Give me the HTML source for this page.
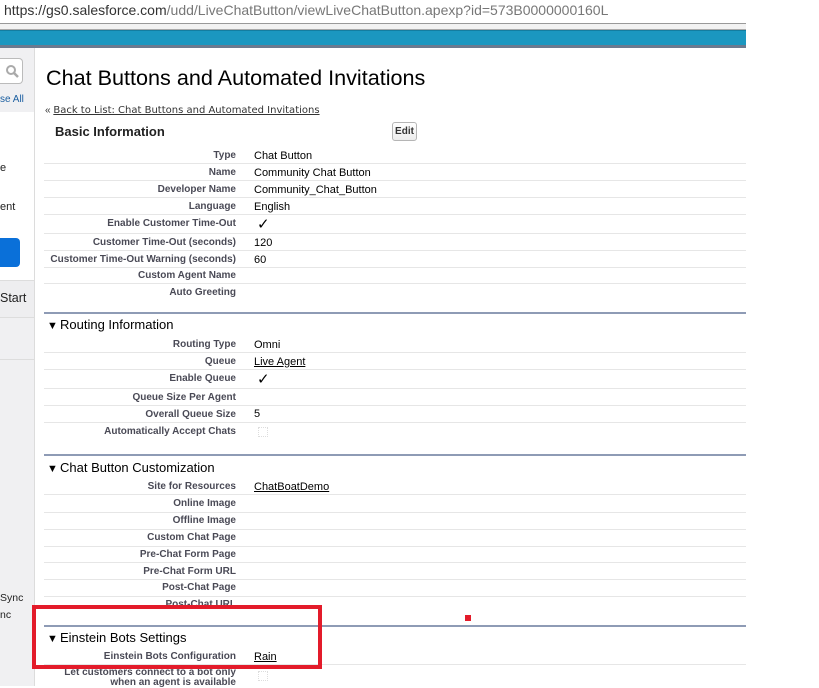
<!DOCTYPE html>
<html><head><meta charset="utf-8"><style>
*{margin:0;padding:0;box-sizing:border-box}
body{width:819px;height:686px;overflow:hidden;background:#fff;font-family:"Liberation Sans",Arial,sans-serif;position:relative}
.a{position:absolute;white-space:nowrap}
.l{position:absolute;right:583px;font-size:10px;font-weight:bold;color:#4a4a56;text-align:right;white-space:nowrap;margin-top:1px}
.v{position:absolute;left:254px;font-size:11px;color:#000;white-space:nowrap;margin-top:1px}
.hr{position:absolute;left:44px;width:702px;height:1px;background:#e6e6e6}
.sec{position:absolute;left:44px;width:702px;height:2px;background:#8e9bb5}
.h{position:absolute;left:47px;font-size:13px;color:#000;white-space:nowrap;margin-top:1px}
.h b{font-size:11px;display:inline-block;width:13px;font-weight:normal}
.cb{position:absolute;left:258px;width:10px;height:10px;border:1px dotted #ddd}
u{text-decoration:underline}
</style></head><body>
<div class="a" style="left:4px;top:2px;font-size:14px;color:#333">https://gs0.salesforce.com<span style="color:#777">/udd/LiveChatButton/viewLiveChatButton.apexp?id=573B0000000160L</span></div>
<div class="a" style="left:0;top:23px;width:746px;height:7px;background:#f2f2f2;border-top:1px solid #999;border-bottom:1px solid #aaa"></div>
<div class="a" style="left:0;top:30px;width:746px;height:16px;background:#1b97c0;border-top:1px solid #137da0"></div>
<div class="a" style="left:0;top:45px;width:746px;height:3px;background:#6b7a8f"></div>
<!-- sidebar -->
<div class="a" style="left:0;top:48px;width:35px;height:638px;background:#f0f0f2;border-right:1px solid #dcdcdc"></div>
<div class="a" style="left:0;top:58px;width:23px;height:26px;background:#fff;border:1px solid #bbb;border-left:none;border-radius:0 4px 4px 0"></div>
<svg class="a" style="left:5px;top:64px" width="14" height="14" viewBox="0 0 14 14"><circle cx="6" cy="6" r="4" fill="none" stroke="#aaa" stroke-width="2"/><path d="M9 9l4 4" stroke="#aaa" stroke-width="2.5"/></svg>
<div class="a" style="left:0;top:94px;font-size:10px;color:#1a5ea0">se All</div>
<div class="a" style="left:0;top:112px;width:34px;height:168px;background:#fff"></div>
<div class="a" style="left:0;top:162px;font-size:11px;color:#222">e</div>
<div class="a" style="left:0;top:201px;font-size:11px;color:#222">ent</div>
<div class="a" style="left:0;top:238px;width:20px;height:29px;background:#0a70d9;border-radius:0 4px 4px 0"></div>
<div class="a" style="left:0;top:280px;width:34px;height:38px;background:#eeeef0;border-top:1px solid #ddd;border-bottom:1px solid #ddd"></div>
<div class="a" style="left:0;top:291px;font-size:12.5px;color:#222">Start</div>
<div class="a" style="left:0;top:359px;width:34px;height:1px;background:#ddd"></div>
<div class="a" style="left:0;top:592px;font-size:10.5px;color:#222">Sync</div>
<div class="a" style="left:0;top:609px;font-size:10.5px;color:#222">nc</div>
<!-- main -->
<div class="a" style="left:46px;top:65px;font-size:21.6px;color:#000">Chat Buttons and Automated Invitations</div>
<div class="a" style="left:45px;top:105px;font-size:10px;color:#333">« <u style="font-family:'DejaVu Sans',sans-serif;font-size:10px"> Back to List: Chat Buttons and Automated Invitations</u></div>
<div class="a" style="left:55px;top:124px;font-size:13px;font-weight:bold;color:#222">Basic Information</div>
<div class="a" style="left:392px;top:122px;width:25px;height:19px;border:1px solid #b5b5b5;border-radius:3px;background:linear-gradient(#fff,#ececec);font-size:10px;font-weight:bold;color:#333;text-align:center;line-height:17px">Edit</div>

<div class="l" style="top:149px">Type</div><div class="v" style="top:149px">Chat Button</div>
<div class="hr" style="top:163px"></div>
<div class="l" style="top:166px">Name</div><div class="v" style="top:166px">Community Chat Button</div>
<div class="hr" style="top:180px"></div>
<div class="l" style="top:183px">Developer Name</div><div class="v" style="top:183px">Community_Chat_Button</div>
<div class="hr" style="top:197px"></div>
<div class="l" style="top:200px">Language</div><div class="v" style="top:200px">English</div>
<div class="hr" style="top:214px"></div>
<div class="l" style="top:217px">Enable Customer Time-Out</div><div class="v" style="top:214px;left:257px;font-size:15px">✓</div>
<div class="hr" style="top:233px"></div>
<div class="l" style="top:236px">Customer Time-Out (seconds)</div><div class="v" style="top:236px">120</div>
<div class="hr" style="top:250px"></div>
<div class="l" style="top:253px">Customer Time-Out Warning (seconds)</div><div class="v" style="top:253px">60</div>
<div class="hr" style="top:267px"></div>
<div class="l" style="top:269px">Custom Agent Name</div>
<div class="hr" style="top:283px"></div>
<div class="l" style="top:286px">Auto Greeting</div>

<div class="sec" style="top:312px"></div>
<div class="h" style="top:316px"><b>▼</b>Routing Information</div>
<div class="l" style="top:338px">Routing Type</div><div class="v" style="top:338px">Omni</div>
<div class="hr" style="top:352px"></div>
<div class="l" style="top:355px">Queue</div><div class="v" style="top:355px"><u>Live Agent</u></div>
<div class="hr" style="top:369px"></div>
<div class="l" style="top:372px">Enable Queue</div><div class="v" style="top:369px;left:257px;font-size:15px">✓</div>
<div class="hr" style="top:388px"></div>
<div class="l" style="top:391px">Queue Size Per Agent</div>
<div class="hr" style="top:405px"></div>
<div class="l" style="top:408px">Overall Queue Size</div><div class="v" style="top:407px">5</div>
<div class="hr" style="top:422px"></div>
<div class="l" style="top:425px">Automatically Accept Chats</div><div class="cb" style="top:427px"></div>

<div class="sec" style="top:454px"></div>
<div class="h" style="top:459px"><b>▼</b>Chat Button Customization</div>
<div class="l" style="top:480px">Site for Resources</div><div class="v" style="top:480px"><u>ChatBoatDemo</u></div>
<div class="hr" style="top:494px"></div>
<div class="l" style="top:497px">Online Image</div>
<div class="hr" style="top:512px"></div>
<div class="l" style="top:514px">Offline Image</div>
<div class="hr" style="top:529px"></div>
<div class="l" style="top:531px">Custom Chat Page</div>
<div class="hr" style="top:546px"></div>
<div class="l" style="top:548px">Pre-Chat Form Page</div>
<div class="hr" style="top:562px"></div>
<div class="l" style="top:565px">Pre-Chat Form URL</div>
<div class="hr" style="top:579px"></div>
<div class="l" style="top:581px">Post-Chat Page</div>
<div class="hr" style="top:596px"></div>
<div class="l" style="top:598px">Post-Chat URL</div>

<div class="sec" style="top:625px"></div>
<div class="h" style="top:629px"><b>▼</b>Einstein Bots Settings</div>
<div class="l" style="top:650px">Einstein Bots Configuration</div><div class="v" style="top:650px"><u>Rain</u></div>
<div class="hr" style="top:664px"></div>
<div class="l" style="top:667px;line-height:10px">Let customers connect to a bot only<br>when an agent is available</div><div class="cb" style="top:671px"></div>

<div class="a" style="left:32px;top:605px;width:290px;height:64px;border:4px solid #e31b2a"></div>
<div class="a" style="left:465px;top:615px;width:6px;height:6px;background:#e31b2a"></div>
</body></html>
